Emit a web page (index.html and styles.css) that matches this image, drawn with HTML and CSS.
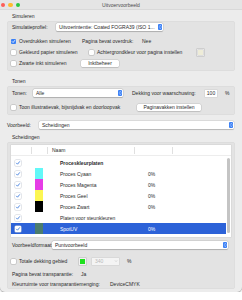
FILE: index.html
```html
<!DOCTYPE html>
<html lang="nl">
<head>
    <meta charset="UTF-8">
    <title>Uitvoervoorbeeld</title>
    <link rel="stylesheet" href="styles.css">
</head>
<body>

<div class="window">
    <div class="titlebar">
        <div class="lights">
            <span class="light red"></span>
            <span class="light yellow"></span>
            <span class="light green"></span>
        </div>
        <div class="title">Uitvoervoorbeeld</div>
        <div></div>
    </div>

    <div class="content">
        <!-- Simuleren -->
        <div class="section-label">Simuleren</div>
        <div class="group group-sim">
            <div class="row">
                <span class="label w-45">Simulatieprofiel:</span>
                <div class="popup w-107">
                    <span>Uitvoerintentie: Coated FOGRA39 (ISO 1...</span>
                    <span class="stepper"><svg viewBox="0 0 4 6"><path d="M1.1 2.5 2 1.5 2.9 2.5M1.1 3.5 2 4.5 2.9 3.5"/></svg></span>
                </div>
            </div>
            <div class="row mt-6">
                <div class="cell w-71">
                    <span class="check on"><svg viewBox="0 0 5 5"><path d="M1.2 2.6 2.1 3.5 3.8 1.4"/></svg></span>
                    <span>Overdrukken simuleren</span>
                </div>
                <span class="cell w-60">Pagina bevat overdruk:</span>
                <span>Nee</span>
            </div>
            <div class="row mt-3">
                <div class="cell w-78">
                    <span class="check"></span>
                    <span>Gekleurd papier simuleren</span>
                </div>
                <div class="cell w-108">
                    <span class="check"></span>
                    <span>Achtergrondkleur voor pagina instellen</span>
                </div>
                <span class="swatch-well"><span class="swatch-paper"></span></span>
            </div>
            <div class="row mt-3">
                <div class="cell w-70">
                    <span class="check"></span>
                    <span>Zwarte inkt simuleren</span>
                </div>
                <div class="button w-38">Inktbeheer</div>
            </div>
        </div>

        <!-- Tonen -->
        <div class="section-label mt-7">Tonen</div>
        <div class="group group-show">
            <div class="row">
                <span class="label w-22">Tonen:</span>
                <div class="popup w-90">
                    <span>Alle</span>
                    <span class="stepper"><svg viewBox="0 0 4 6"><path d="M1.1 2.5 2 1.5 2.9 2.5M1.1 3.5 2 4.5 2.9 3.5"/></svg></span>
                </div>
                <span class="label ml-8 w-74">Dekking voor waarschuwing:</span>
                <div class="field w-12">100</div>
                <span class="ml-8">%</span>
            </div>
            <div class="row mt-6">
                <div class="cell w-126">
                    <span class="check"></span>
                    <span>Toon illustratievak, bijsnijdvak en doorloopvak</span>
                </div>
                <div class="button w-64">Paginavakken instellen</div>
            </div>
        </div>

        <!-- Voorbeeld -->
        <div class="row preview-row">
            <span class="label w-33">Voorbeeld:</span>
            <div class="popup w-195">
                <span>Scheidingen</span>
                <span class="stepper"><svg viewBox="0 0 4 6"><path d="M1.1 2.5 2 1.5 2.9 2.5M1.1 3.5 2 4.5 2.9 3.5"/></svg></span>
            </div>
        </div>

        <!-- Scheidingen -->
        <div class="section-label mt-5">Scheidingen</div>
        <div class="group group-sep">
            <div class="sep-table">
                <div class="sep-head">
                    <span></span>
                    <span></span>
                    <span class="head-name">Naam</span>
                    <span></span>
                    <span class="last"></span>
                </div>
                <div class="sep-body">
                    <div class="sep-rows">
                        <div class="sep-row">
                            <span class="c-check"><span class="check tbl"><svg viewBox="0 0 5 5"><path d="M1.2 2.6 2.1 3.5 3.8 1.4"/></svg></span></span>
                            <span class="c-swatch"></span>
                            <span class="c-name strong">Proceskleurplaten</span>
                            <span class="c-pct"></span>
                        </div>
                        <div class="sep-row">
                            <span class="c-check"><span class="check tbl"><svg viewBox="0 0 5 5"><path d="M1.2 2.6 2.1 3.5 3.8 1.4"/></svg></span></span>
                            <span class="c-swatch"><span class="ink cyan"></span></span>
                            <span class="c-name">Proces Cyaan</span>
                            <span class="c-pct">0%</span>
                        </div>
                        <div class="sep-row">
                            <span class="c-check"><span class="check tbl"><svg viewBox="0 0 5 5"><path d="M1.2 2.6 2.1 3.5 3.8 1.4"/></svg></span></span>
                            <span class="c-swatch"><span class="ink magenta"></span></span>
                            <span class="c-name">Proces Magenta</span>
                            <span class="c-pct">0%</span>
                        </div>
                        <div class="sep-row">
                            <span class="c-check"><span class="check tbl"><svg viewBox="0 0 5 5"><path d="M1.2 2.6 2.1 3.5 3.8 1.4"/></svg></span></span>
                            <span class="c-swatch"><span class="ink yellow-ink"></span></span>
                            <span class="c-name">Proces Geel</span>
                            <span class="c-pct">0%</span>
                        </div>
                        <div class="sep-row">
                            <span class="c-check"><span class="check tbl"><svg viewBox="0 0 5 5"><path d="M1.2 2.6 2.1 3.5 3.8 1.4"/></svg></span></span>
                            <span class="c-swatch"><span class="ink black"></span></span>
                            <span class="c-name">Proces Zwart</span>
                            <span class="c-pct">0%</span>
                        </div>
                        <div class="sep-row">
                            <span class="c-check"><span class="check tbl"><svg viewBox="0 0 5 5"><path d="M1.2 2.6 2.1 3.5 3.8 1.4"/></svg></span></span>
                            <span class="c-swatch"></span>
                            <span class="c-name">Platen voor steunkleuren</span>
                            <span class="c-pct"></span>
                        </div>
                        <div class="sep-row selected">
                            <span class="c-check"><span class="check tbl"><svg viewBox="0 0 5 5"><path d="M1.2 2.6 2.1 3.5 3.8 1.4"/></svg></span></span>
                            <span class="c-swatch"><span class="ink spot"></span></span>
                            <span class="c-name">SpotUV</span>
                            <span class="c-pct">0%</span>
                        </div>
                    </div>
                    <div class="scrollbar"><span class="thumb"></span></div>
                </div>
            </div>

            <div class="row mt-4">
                <span class="label w-41">Voorbeeldformaat:</span>
                <div class="popup w-176">
                    <span>Puntvoorbeeld</span>
                    <span class="stepper"><svg viewBox="0 0 4 6"><path d="M1.1 2.5 2 1.5 2.9 2.5M1.1 3.5 2 4.5 2.9 3.5"/></svg></span>
                </div>
            </div>
            <div class="row mt-8">
                <div class="cell w-68">
                    <span class="check"></span>
                    <span>Totale dekking gebied</span>
                </div>
                <span class="swatch-well"><span class="swatch-green"></span></span>
                <div class="field disabled w-27 ml-6">
                    <span>340</span>
                    <svg class="chev" viewBox="0 0 4 4"><path d="M1 1.5 2 2.5 3 1.5"/></svg>
                </div>
                <span class="ml-8">%</span>
            </div>
            <div class="row info mt-5">
                <span class="label w-70">Pagina bevat transparantie:</span>
                <span>Ja</span>
            </div>
            <div class="row info mt-2">
                <span class="label w-99">Kleurruimte voor transparantiemenging:</span>
                <span>DeviceCMYK</span>
            </div>
        </div>
    </div>
</div>

</body>
</html>
```

FILE: styles.css
```css
* {
    box-sizing: border-box;
}
body {
    margin: 0;
    background-color: #ffffff;
    font-family: 'Liberation Sans', Arial, sans-serif;
    font-size: 5px;
    color: #2a2a2a;
}
.window {
    width: 242px;
    height: 292px;
    background-color: #ececec;
    border-radius: 0 0 5px 5px;
    box-shadow: 0 0 0 0.5px rgba(0, 0, 0, 0.25), 0 2px 5px rgba(0, 0, 0, 0.12);
    overflow: hidden;
}
.titlebar {
    height: 10px;
    display: grid;
    grid-template-columns: 1fr auto 1fr;
    align-items: center;
    background-color: #e5e5e5;
    box-shadow: inset 0 -0.5px 0 #cdcdcd;
}
.lights {
    display: flex;
    gap: 3px;
    padding-left: 0.5px;
}
.light {
    width: 4.5px;
    height: 4.5px;
    border-radius: 50%;
}
.red { background-color: #fd5e57; }
.yellow { background-color: #febb2e; }
.green { background-color: #29c740; }
.title {
    color: #4b4b4b;
}
.content {
    padding: 0 7px;
}
.section-label {
    height: 7px;
    line-height: 7px;
    margin: 3px 0 1px 5px;
}
.group {
    background-color: #e3e3e3;
    box-shadow: inset 0 0 0 0.5px #d8d8d8;
    border-radius: 3px;
    padding: 2px 4px 4px;
}
.group-show {
    padding-top: 3px;
}
.group-sep {
    padding: 3px 4px 1px;
}
.row {
    display: flex;
    align-items: center;
    height: 8px;
    white-space: nowrap;
}
.label {
    flex: none;
    padding-left: 1px;
}
.cell {
    flex: none;
    display: flex;
    align-items: center;
    gap: 3px;
}
/* spacing + width helpers */
.mt-2 { margin-top: 2px; }
.mt-3 { margin-top: 3px; }
.mt-4 { margin-top: 4px; }
.mt-5 { margin-top: 5px; }
.mt-6 { margin-top: 6px; }
.mt-7 { margin-top: 7px; }
.mt-8 { margin-top: 8px; }
.ml-6 { margin-left: 6px; }
.ml-8 { margin-left: 8px; }
.w-12 { width: 12px; }
.w-22 { width: 22px; }
.w-27 { width: 27px; }
.w-33 { width: 33px; }
.w-38 { width: 38px; }
.w-41 { width: 41px; }
.w-45 { width: 45px; }
.w-60 { width: 60px; }
.w-64 { width: 64px; }
.w-68 { width: 68px; }
.w-70 { width: 70px; }
.w-71 { width: 71px; }
.w-74 { width: 74px; }
.w-78 { width: 78px; }
.w-90 { width: 90px; }
.w-99 { width: 99px; }
.w-107 { width: 107px; }
.w-108 { width: 108px; }
.w-126 { width: 126px; }
.w-176 { width: 176px; }
.w-195 { width: 195px; }

/* controls */
.check {
    flex: none;
    width: 5px;
    height: 5px;
    border-radius: 1px;
    background-color: #ffffff;
    box-shadow: 0 0 0 0.5px rgba(0, 0, 0, 0.22);
    display: flex;
}
.check svg {
    width: 5px;
    height: 5px;
    fill: none;
    stroke: #ffffff;
    stroke-width: 0.8;
    stroke-linecap: round;
    stroke-linejoin: round;
}
.check.on {
    background-color: #3a80f6;
    box-shadow: none;
}
.check.tbl {
    width: 6px;
    height: 6px;
    box-shadow: 0 0 0 0.5px #c9cdd6;
}
.check.tbl svg {
    width: 6px;
    height: 6px;
    stroke: #4d86e0;
}
.popup {
    flex: none;
    height: 8px;
    display: flex;
    align-items: center;
    justify-content: space-between;
    padding: 0 1px 0 3px;
    background-color: #ffffff;
    border-radius: 1.5px;
    box-shadow: 0 0 0 0.5px rgba(0, 0, 0, 0.12), 0 0.5px 1px rgba(0, 0, 0, 0.18);
}
.stepper {
    width: 4.5px;
    height: 6px;
    border-radius: 1px;
    background-color: #3a80f6;
    display: flex;
}
.stepper svg {
    width: 4.5px;
    height: 6px;
    fill: none;
    stroke: #ffffff;
    stroke-width: 0.6;
}
.button {
    flex: none;
    height: 7px;
    display: flex;
    align-items: center;
    justify-content: center;
    background-color: #ffffff;
    border-radius: 1.5px;
    box-shadow: 0 0 0 0.5px rgba(0, 0, 0, 0.12), 0 0.5px 1px rgba(0, 0, 0, 0.18);
}
.field {
    flex: none;
    height: 7px;
    display: flex;
    align-items: center;
    justify-content: center;
    background-color: #ffffff;
    box-shadow: 0 0 0 0.5px #cfcfcf;
}
.field.disabled {
    justify-content: space-between;
    padding: 0 1px 0 3px;
    color: #b9b9b9;
    background-color: #f4f4f4;
}
.chev {
    width: 4px;
    height: 4px;
    fill: none;
    stroke: #b5b5b5;
    stroke-width: 0.5;
}
.swatch-well {
    flex: none;
    width: 7px;
    height: 7px;
    padding: 1px;
    background-color: #f2f2f2;
    box-shadow: 0 0 0 0.5px #b9b9b9;
    display: flex;
}
.swatch-paper {
    flex: 1;
    background-color: #eeecd8;
    box-shadow: 0 0 0 0.5px #c9c9c9;
}
.swatch-green {
    flex: 1;
    background-color: #1ee01e;
}
.preview-row {
    margin-top: 6px;
    margin-left: -1px;
}

/* separations table */
.sep-table {
    height: 92px;
    background-color: #ffffff;
    box-shadow: 0 0 0 0.5px #d2d2d2;
}
.sep-head {
    display: grid;
    grid-template-columns: 21px 16px 87px 38px 1fr;
    height: 11px;
    align-items: center;
    box-shadow: inset 0 -0.5px 0 #dcdcdc;
}
.sep-head span {
    height: 7px;
    line-height: 7px;
    border-right: 0.5px solid #e0e0e0;
}
.sep-head .last {
    border-right: none;
}
.head-name {
    padding-left: 4px;
}
.sep-body {
    display: flex;
    padding-top: 1px;
}
.sep-rows {
    width: 215px;
}
.sep-row {
    display: grid;
    grid-template-columns: 21px 16px 87px 38px;
    height: 11px;
    align-items: center;
}
.sep-row.selected {
    background-color: #2c62d8;
    color: #ffffff;
}
.c-check {
    padding-left: 4px;
    display: flex;
}
.c-swatch {
    height: 11px;
    padding-left: 3px;
    display: flex;
}
.ink {
    width: 8px;
    height: 11px;
}
.cyan { background-color: #63f8f8; }
.magenta { background-color: #e63ce6; }
.yellow-ink { background-color: #fcf653; }
.black { background-color: #000000; }
.spot { background-color: #4b7c6d; }
.c-name {
    padding-left: 12px;
}
.c-name.strong {
    font-weight: bold;
}
.c-pct {
    padding-left: 13px;
}
.scrollbar {
    width: 4px;
    padding: 1px 0.5px 0 0.5px;
}
.thumb {
    display: block;
    width: 3px;
    height: 75px;
    border-radius: 1.5px;
    background-color: #c4c4c4;
}
.info {
    height: 8px;
}
```
